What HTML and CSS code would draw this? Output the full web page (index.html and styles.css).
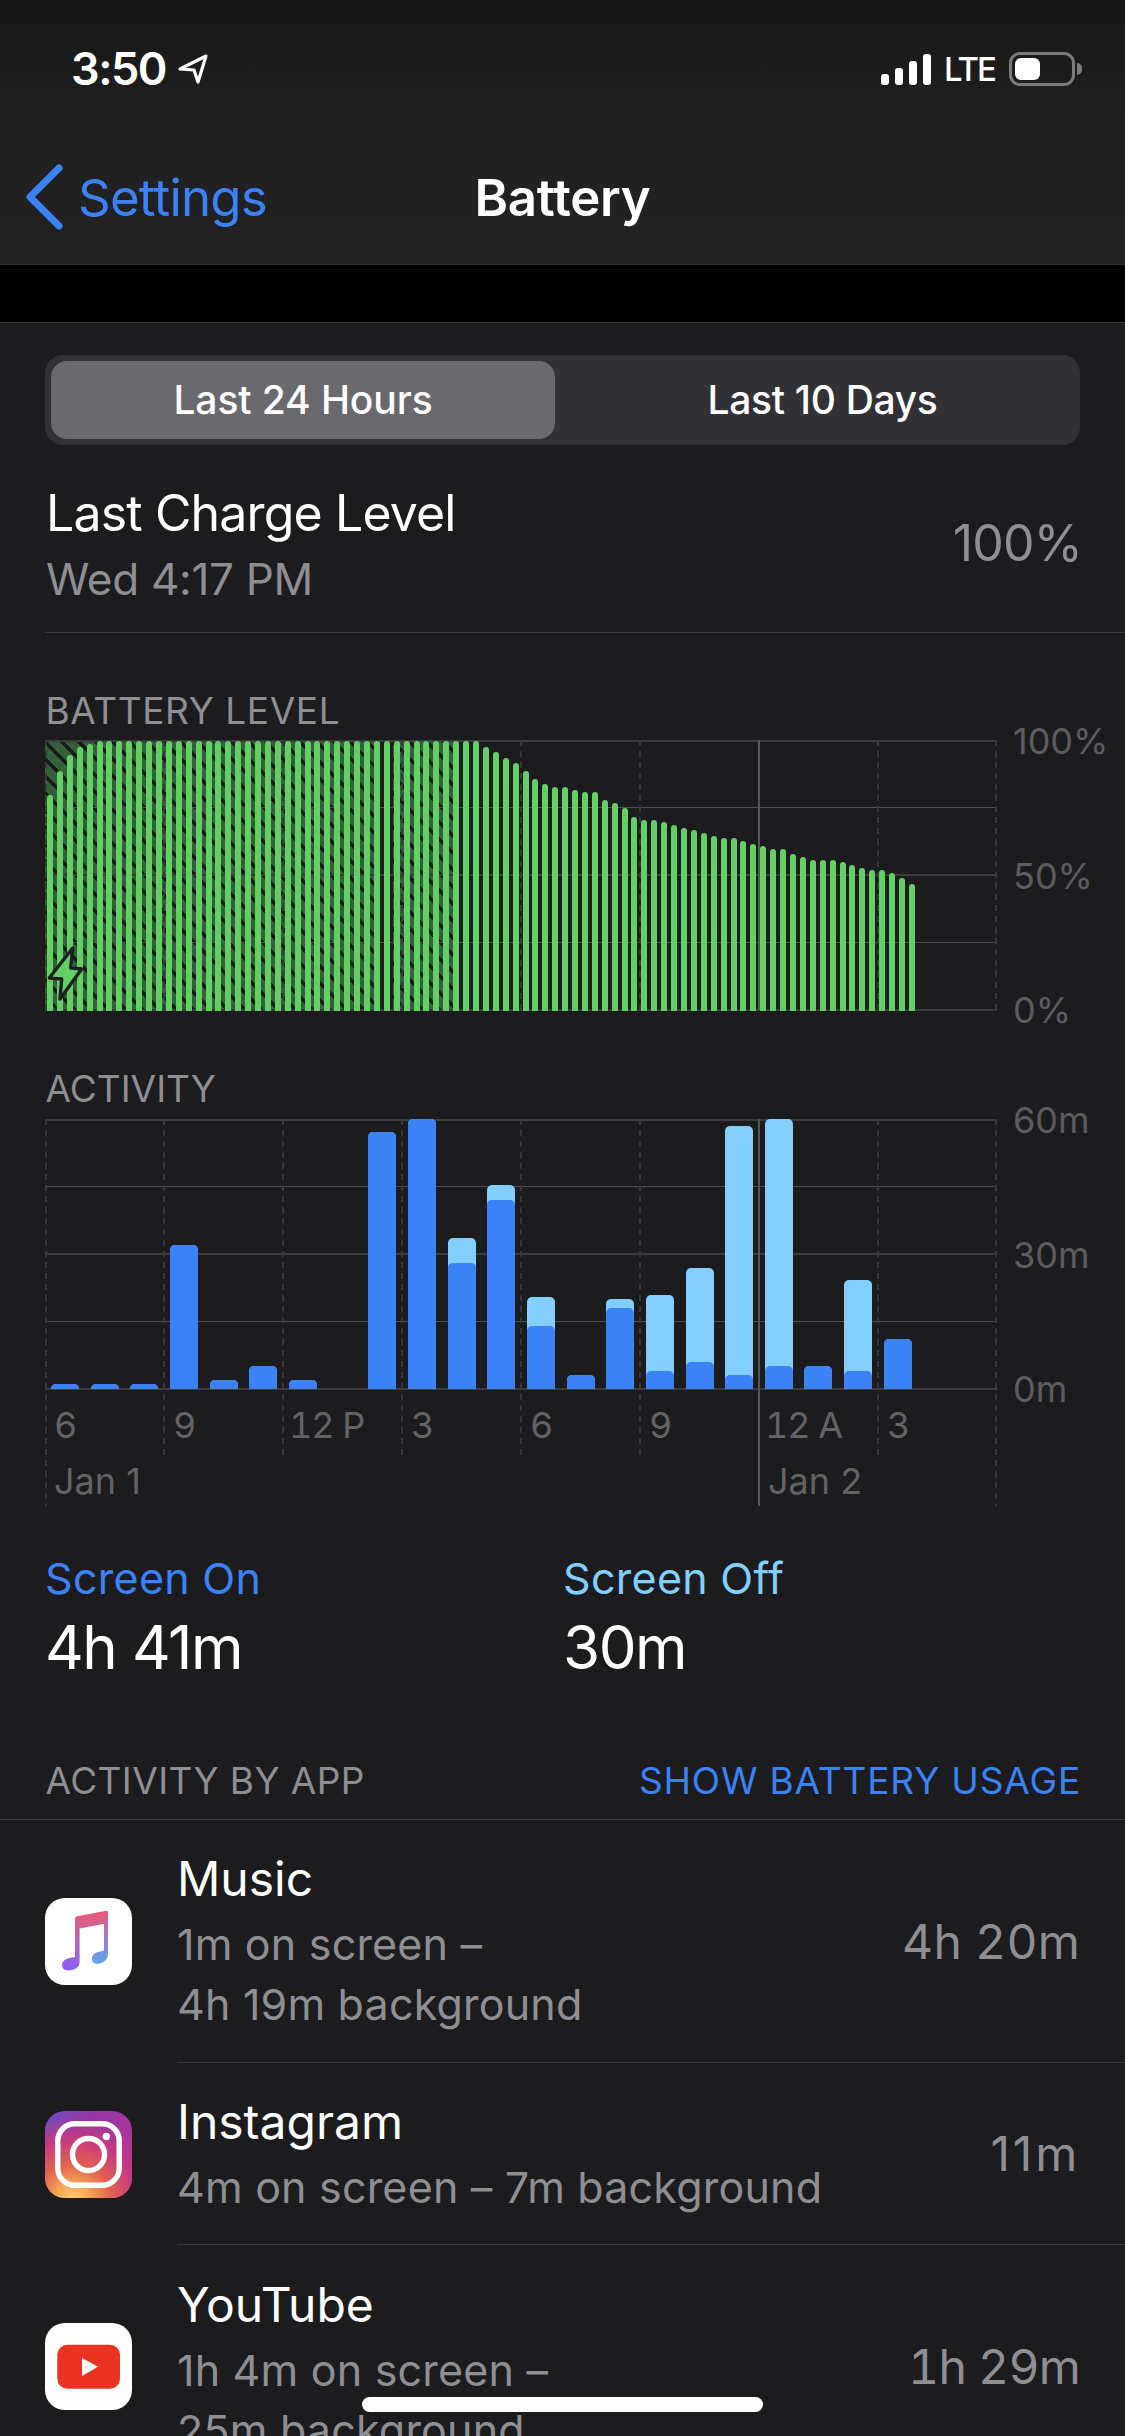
FILE: index.html
```html
<!DOCTYPE html>
<html lang="en">
<head>
<meta charset="utf-8">
<title>Battery</title>
<link rel="stylesheet" href="styles.css">
</head>
<body>
<div class="screen">
  <header class="header">
    <div class="status">
      <div class="status-left">
        <span class="time">3:50</span>
        <svg class="loc" width="32" height="32" viewBox="0 0 32 32"><path d="M29 3 L3 16 L17 17 L21 29 Z"/></svg>
      </div>
      <div class="status-right">
        <div class="signal"><i class="s1"></i><i class="s2"></i><i class="s3"></i><i class="s4"></i></div>
        <span class="lte">LTE</span>
        <div class="batt"><div class="batt-body"><div class="batt-fill"></div></div><div class="batt-nub"></div></div>
      </div>
    </div>
    <nav class="nav">
      <div class="back">
        <svg class="chev" width="38" height="66" viewBox="0 0 38 66"><path d="M34 4 L5 33 L34 62"/></svg>
        <span>Settings</span>
      </div>
      <div class="nav-title">Battery</div>
      <div></div>
    </nav>
  </header>
  <div class="gap"></div>
  <main class="content">
    <div class="seg">
      <div class="seg-item seg-on">Last 24 Hours</div>
      <div class="seg-item seg-off">Last 10 Days</div>
    </div>
    <div class="charge">
      <div>
        <div class="charge-title">Last Charge Level</div>
        <div class="charge-sub">Wed 4:17 PM</div>
      </div>
      <div class="charge-val">100%</div>
    </div>

    <div class="sec-title sec-battery">BATTERY LEVEL</div>
    <div class="chart">
      <div class="plot plot-battery">
        <div class="hatch hatch-a"></div>
        <div class="hatch hatch-b"></div>
        <svg class="grid" width="952" height="270" viewBox="0 0 952 270">
          <line class="hm" x1="0" y1="1" x2="952" y2="1"/>
          <line class="hl" x1="0" y1="67.5" x2="952" y2="67.5"/>
          <line class="hm" x1="0" y1="135" x2="952" y2="135"/>
          <line class="hl" x1="0" y1="202.5" x2="952" y2="202.5"/>
          <line class="hm" x1="0" y1="270" x2="952" y2="270"/>
          <line class="vd" x1="1" y1="0" x2="1" y2="270"/>
          <line class="vd" x1="119" y1="0" x2="119" y2="270"/>
          <line class="vd" x1="238" y1="0" x2="238" y2="270"/>
          <line class="vd" x1="357" y1="0" x2="357" y2="270"/>
          <line class="vd" x1="476" y1="0" x2="476" y2="270"/>
          <line class="vd" x1="595" y1="0" x2="595" y2="270"/>
          <line class="vs" x1="714" y1="0" x2="714" y2="270"/>
          <line class="vd" x1="833" y1="0" x2="833" y2="270"/>
          <line class="vd" x1="951" y1="0" x2="951" y2="270"/>
        </svg>
        <div class="bbars">
          <i style="height:216px"></i><i style="height:240px"></i><i style="height:256px"></i><i style="height:264px"></i><i style="height:267px"></i>
          <i style="height:270px"></i><i style="height:270px"></i><i style="height:270px"></i><i style="height:270px"></i><i style="height:270px"></i>
          <i style="height:270px"></i><i style="height:270px"></i><i style="height:270px"></i><i style="height:270px"></i><i style="height:270px"></i>
          <i style="height:270px"></i><i style="height:270px"></i><i style="height:270px"></i><i style="height:270px"></i><i style="height:270px"></i>
          <i style="height:270px"></i><i style="height:270px"></i><i style="height:270px"></i><i style="height:270px"></i><i style="height:270px"></i>
          <i style="height:270px"></i><i style="height:270px"></i><i style="height:270px"></i><i style="height:270px"></i><i style="height:270px"></i>
          <i style="height:270px"></i><i style="height:270px"></i><i style="height:270px"></i><i style="height:270px"></i><i style="height:270px"></i>
          <i style="height:270px"></i><i style="height:270px"></i><i style="height:270px"></i><i style="height:270px"></i><i style="height:270px"></i>
          <i style="height:270px"></i><i style="height:270px"></i><i style="height:270px"></i><i style="height:270px"></i>
          <i style="height:264px"></i><i style="height:259px"></i><i style="height:253px"></i><i style="height:248px"></i><i style="height:240px"></i>
          <i style="height:232px"></i><i style="height:227px"></i><i style="height:224px"></i><i style="height:224px"></i><i style="height:221px"></i>
          <i style="height:219px"></i><i style="height:219px"></i><i style="height:211px"></i><i style="height:208px"></i><i style="height:203px"></i>
          <i style="height:194px"></i><i style="height:191px"></i><i style="height:191px"></i><i style="height:189px"></i><i style="height:186px"></i>
          <i style="height:183px"></i><i style="height:181px"></i><i style="height:178px"></i><i style="height:175px"></i><i style="height:173px"></i>
          <i style="height:173px"></i><i style="height:170px"></i><i style="height:167px"></i><i style="height:165px"></i><i style="height:162px"></i>
          <i style="height:162px"></i><i style="height:157px"></i><i style="height:154px"></i><i style="height:151px"></i><i style="height:151px"></i>
          <i style="height:151px"></i><i style="height:149px"></i><i style="height:146px"></i><i style="height:143px"></i><i style="height:141px"></i>
          <i style="height:141px"></i><i style="height:138px"></i><i style="height:133px"></i><i style="height:127px"></i>
        </div>
        <svg class="bolt" width="42" height="60" viewBox="0 0 42 60"><path d="M26.7 3 L24.7 23 L35.7 24 L14 54 L15.7 34 L3.3 33 Z"/></svg>
      </div>
      <div class="axis"><span>100%</span><span>50%</span><span>0%</span></div>
    </div>

    <div class="sec-title sec-activity">ACTIVITY</div>
    <div class="chart">
      <div class="plot plot-activity">
        <svg class="grid" width="952" height="387" viewBox="0 0 952 387">
          <line class="hm" x1="0" y1="1" x2="952" y2="1"/>
          <line class="hl" x1="0" y1="67.5" x2="952" y2="67.5"/>
          <line class="hm" x1="0" y1="135" x2="952" y2="135"/>
          <line class="hl" x1="0" y1="202.5" x2="952" y2="202.5"/>
          <line class="hm" x1="0" y1="270" x2="952" y2="270"/>
          <line class="vd" x1="1" y1="0" x2="1" y2="387"/>
          <line class="vd" x1="119" y1="0" x2="119" y2="338"/>
          <line class="vd" x1="238" y1="0" x2="238" y2="338"/>
          <line class="vd" x1="357" y1="0" x2="357" y2="338"/>
          <line class="vd" x1="476" y1="0" x2="476" y2="338"/>
          <line class="vd" x1="595" y1="0" x2="595" y2="338"/>
          <line class="vs" x1="714" y1="0" x2="714" y2="387"/>
          <line class="vd" x1="833" y1="0" x2="833" y2="338"/>
          <line class="vd" x1="951" y1="0" x2="951" y2="387"/>
        </svg>
        <div class="abars">
          <div class="ab" style="height:5px"><div class="ab-on" style="height:5px"></div></div>
          <div class="ab" style="height:5px"><div class="ab-on" style="height:5px"></div></div>
          <div class="ab" style="height:5px"><div class="ab-on" style="height:5px"></div></div>
          <div class="ab" style="height:144px"><div class="ab-on" style="height:144px"></div></div>
          <div class="ab" style="height:9px"><div class="ab-on" style="height:9px"></div></div>
          <div class="ab" style="height:23px"><div class="ab-on" style="height:23px"></div></div>
          <div class="ab" style="height:9px"><div class="ab-on" style="height:9px"></div></div>
          <div class="ab" style="height:0"></div>
          <div class="ab" style="height:257px"><div class="ab-on" style="height:257px"></div></div>
          <div class="ab" style="height:270px"><div class="ab-on" style="height:270px"></div></div>
          <div class="ab" style="height:151px"><div class="ab-on" style="height:126px"></div></div>
          <div class="ab" style="height:204px"><div class="ab-on" style="height:189px"></div></div>
          <div class="ab" style="height:92px"><div class="ab-on" style="height:63px"></div></div>
          <div class="ab" style="height:14px"><div class="ab-on" style="height:14px"></div></div>
          <div class="ab" style="height:90px"><div class="ab-on" style="height:81px"></div></div>
          <div class="ab" style="height:94px"><div class="ab-on" style="height:18px"></div></div>
          <div class="ab" style="height:121px"><div class="ab-on" style="height:27px"></div></div>
          <div class="ab" style="height:263px"><div class="ab-on" style="height:14px"></div></div>
          <div class="ab" style="height:270px"><div class="ab-on" style="height:23px"></div></div>
          <div class="ab" style="height:23px"><div class="ab-on" style="height:23px"></div></div>
          <div class="ab" style="height:109px"><div class="ab-on" style="height:18px"></div></div>
          <div class="ab" style="height:50px"><div class="ab-on" style="height:50px"></div></div>
        </div>
        <div class="ticks">
          <span>6</span><span>9</span><span class="t12">12 P</span><span>3</span><span>6</span><span>9</span><span class="t12">12 A</span><span>3</span>
        </div>
        <div class="days">
          <span class="day1">Jan 1</span><span class="day2">Jan 2</span>
        </div>
      </div>
      <div class="axis"><span>60m</span><span>30m</span><span>0m</span></div>
    </div>

    <div class="stats">
      <div>
        <div class="stat-label stat-on">Screen On</div>
        <div class="stat-val">4h 41m</div>
      </div>
      <div>
        <div class="stat-label stat-off">Screen Off</div>
        <div class="stat-val">30m</div>
      </div>
    </div>

    <div class="apps-head">
      <span>ACTIVITY BY APP</span>
      <span class="apps-link">SHOW BATTERY USAGE</span>
    </div>

    <div class="row">
      <svg class="icon" width="87" height="87" viewBox="0 0 87 87">
        <defs>
          <linearGradient id="noteA" x1="0" y1="12" x2="0" y2="72" gradientUnits="userSpaceOnUse"><stop offset="0" stop-color="#ee5a6f"/><stop offset="0.55" stop-color="#b566c0"/><stop offset="1" stop-color="#8a5cf8"/></linearGradient>
          <linearGradient id="noteB" x1="0" y1="12" x2="0" y2="68" gradientUnits="userSpaceOnUse"><stop offset="0" stop-color="#e45a78"/><stop offset="0.45" stop-color="#a878cc"/><stop offset="1" stop-color="#55a8f2"/></linearGradient>
        </defs>
        <rect width="87" height="87" rx="20" fill="#fff"/>
        <path fill="url(#noteA)" d="M30 21 Q30 18.6 32 18.2 L60 13 L60 25.8 L34.6 30.6 L34.6 64 Q34.6 70 27 72 Q17 74 17 67 Q17 62 24 60 L30 59 Z"/>
        <path fill="url(#noteB)" d="M59 13.3 L61 12.7 Q63 12.4 63 14.5 L63 56 Q63 63 55 65.5 Q47 67 47 60.5 Q47 55.5 53 54 L59 52.6 Z"/>
      </svg>
      <div class="row-body">
        <div class="row-text">
          <div class="row-title">Music</div>
          <div class="row-sub">1m on screen –<br>4h 19m background</div>
        </div>
        <div class="row-val">4h 20m</div>
      </div>
    </div>

    <div class="row">
      <svg class="icon" width="87" height="87" viewBox="0 0 87 87">
        <defs>
          <clipPath id="igClip"><rect width="87" height="87" rx="20"/></clipPath>
          <linearGradient id="igBase" x1="0" y1="0" x2="1" y2="0.35"><stop offset="0" stop-color="#6a4fc4"/><stop offset="0.45" stop-color="#8f38a6"/><stop offset="1" stop-color="#a9359a"/></linearGradient>
          <radialGradient id="igGlow" cx="0.32" cy="1.05" r="1"><stop offset="0" stop-color="#fcd67c"/><stop offset="0.2" stop-color="#f5a955"/><stop offset="0.45" stop-color="#e0614f"/><stop offset="0.72" stop-color="#c83a80"/><stop offset="1" stop-color="#c83a80" stop-opacity="0"/></radialGradient>
        </defs>
        <g clip-path="url(#igClip)">
          <rect width="87" height="87" fill="url(#igBase)"/>
          <rect width="87" height="87" fill="url(#igGlow)"/>
        </g>
        <rect class="ig-line" x="12.8" y="12.8" width="61.4" height="61.4" rx="17"/>
        <circle class="ig-line" cx="43.5" cy="43.5" r="16"/>
        <circle cx="61.3" cy="25.5" r="3.7" fill="#fff"/>
      </svg>
      <div class="row-body row-short">
        <div class="row-text">
          <div class="row-title">Instagram</div>
          <div class="row-sub">4m on screen – 7m background</div>
        </div>
        <div class="row-val val-11">11m</div>
      </div>
    </div>

    <div class="row">
      <svg class="icon" width="87" height="87" viewBox="0 0 87 87">
        <rect width="87" height="87" rx="20" fill="#fff"/>
        <rect x="12.3" y="21.7" width="62.7" height="44" rx="10" fill="#ea3323"/>
        <path d="M37 35 L53 43.7 L37 53 Z" fill="#fff"/>
      </svg>
      <div class="row-body row-last">
        <div class="row-text">
          <div class="row-title">YouTube</div>
          <div class="row-sub">1h 4m on screen –<br>25m background</div>
        </div>
        <div class="row-val val-1h">1h 29m</div>
      </div>
    </div>
  </main>
  <div class="home"></div>
</div>
</body>
</html>
```

FILE: styles.css
```css
* { box-sizing: border-box; }
html, body { margin: 0; padding: 0; background: #000; }
body { font-family: Inter, "Liberation Sans", sans-serif; color: #fff; }
.screen { position: relative; width: 1125px; height: 2436px; overflow: hidden; background: #1c1c1e; display: flex; flex-direction: column; }

.header { flex: none; height: 265px; background: linear-gradient(180deg, #161616 0, #202021 120px, #222224 265px); border-bottom: 1px solid #2e2e30; }
.status { display: flex; justify-content: space-between; align-items: center; height: 50px; margin-top: 44px; padding: 0 43px 0 71px; }
.status-left { display: flex; align-items: center; gap: 11px; }
.time { font-size: 45px; font-weight: 600; letter-spacing: -1.5px; line-height: 50px; }
.loc { fill: none; stroke: #fff; stroke-width: 3.2; stroke-linejoin: round; }
.status-right { display: flex; align-items: center; }
.signal { display: flex; align-items: flex-end; gap: 5.5px; height: 32px; }
.signal i { display: block; width: 8.5px; background: #fff; border-radius: 3px; }
.s1 { height: 11px; } .s2 { height: 17px; } .s3 { height: 24px; } .s4 { height: 31px; }
.lte { font-size: 33px; font-weight: 500; line-height: 50px; margin-left: 13px; letter-spacing: -2px; }
.batt { display: flex; align-items: center; margin-left: 14px; }
.batt-body { width: 66px; height: 34px; border: 3px solid #7b7b7b; border-radius: 11px; padding: 3px; }
.batt-fill { width: 25px; height: 22px; background: #fff; border-radius: 6px; }
.batt-nub { width: 5px; height: 12px; margin-left: 2px; background: #7b7b7b; border-radius: 0 6px 6px 0; }

.nav { display: grid; grid-template-columns: 1fr auto 1fr; align-items: center; height: 66px; margin-top: 70px; padding-left: 25px; }
.back { display: flex; align-items: center; color: #3b82f6; font-size: 51px; letter-spacing: -0.8px; gap: 15px; }
.chev { fill: none; stroke: #3b82f6; stroke-width: 7; stroke-linecap: round; stroke-linejoin: round; }
.nav-title { font-size: 51px; font-weight: 600; letter-spacing: -0.3px; margin-right: 25px; }

.gap { flex: none; height: 57px; background: #000; }
.content { flex: 1; min-height: 0; border-top: 1px solid #38383a; background: #1c1c1e; }

.seg { display: flex; margin: 32px 45px 0; height: 90px; padding: 6px; background: #323236; border-radius: 18px; }
.seg-item { display: flex; align-items: center; justify-content: center; flex: 1; padding-bottom: 2px; font-size: 39px; font-weight: 500; letter-spacing: -0.1px; border-radius: 16px; }
.seg-on { flex: none; width: 504px; background: #6a6a6e; }
.seg-off { padding-left: 16px; letter-spacing: -0.3px; }

.charge { display: flex; justify-content: space-between; align-items: center; margin-left: 45px; padding: 35px 43px 20px 1px; border-bottom: 1px solid #38383a; }
.charge-title { font-size: 50px; line-height: 66px; letter-spacing: -0.85px; }
.charge-sub { font-size: 44px; line-height: 66px; color: #8e8e93; letter-spacing: -0.3px; }
.charge-val { margin-bottom: 6px; font-size: 50px; color: #8e8e93; letter-spacing: -0.8px; }

.sec-title { margin-left: 45.5px; font-size: 37px; line-height: 44px; color: #8e8e93; letter-spacing: 0.6px; }
.sec-battery { margin-top: 56px; margin-bottom: -1px; }
.sec-activity { margin-top: 56px; letter-spacing: 0; }

.chart { display: grid; grid-template-columns: 952px auto; column-gap: 16px; margin: 8px 0 0 45px; }
.plot { position: relative; width: 952px; }
.plot-battery { height: 271px; }
.grid { position: absolute; left: 0; top: 0; overflow: visible; }
.hm { stroke: #3c3c3e; stroke-width: 2; }
.hl { stroke: #505052; stroke-width: 1; }
.vd { stroke: #38383a; stroke-width: 2; stroke-dasharray: 6 5; }
.vs { stroke: #55555a; stroke-width: 2; }
.hatch { position: absolute; top: 1px; height: 270px; background: repeating-linear-gradient(45deg, #31603a 0, #31603a 8.5px, #191b1b 8.5px, #191b1b 12px); }
.hatch-a { left: 0; width: 335px; }
.hatch-b { left: 348px; width: 60px; }
.bbars { position: relative; display: flex; align-items: flex-end; gap: 3.92px; height: 271px; padding-left: 2px; }
.bbars i { display: block; width: 6px; flex: none; background: #63cf65; border-radius: 3px 3px 0 0; }
.bolt { position: absolute; left: 1px; top: 205px; fill: #63cf65; stroke: #1c221d; stroke-width: 3.4; stroke-linejoin: round; }

.abars { position: relative; display: flex; align-items: flex-end; gap: 11.67px; height: 270px; padding-left: 6px; }
.ab { position: relative; display: flex; flex-direction: column; justify-content: flex-end; width: 28px; flex: none; background: #82cffe; border-radius: 5px 5px 0 0; }
.ab-on { background: #3b82f6; border-radius: 5px 5px 0 0; }
.ticks { position: relative; display: grid; grid-template-columns: repeat(8, 119px); margin-top: 14px; font-size: 36px; line-height: 44px; color: #636366; font-variant-numeric: tabular-nums; letter-spacing: -1px; }
.ticks span { padding-left: 9px; }
.ticks .t12 { padding-left: 6px; }
.days { position: relative; display: grid; grid-template-columns: repeat(8, 119px); margin-top: 12px; height: 44px; font-size: 36px; line-height: 44px; color: #636366; }
.day1 { grid-column: 1 / span 2; padding-left: 9px; }
.day2 { grid-column: 7 / span 2; padding-left: 9px; }

.axis { display: flex; flex-direction: column; justify-content: space-between; height: 270px; font-size: 36px; color: #5c5c60; }
.axis span { height: 0; line-height: 0; margin-top: 1px; }

.stats { display: grid; grid-template-columns: 518px 1fr; margin: 50px 0 0 45px; }
.stat-label { font-size: 43px; line-height: 50px; letter-spacing: 0.3px; }
.stat-on { color: #3b82f6; }
.stat-off { color: #82cffe; }
.stat-val { font-size: 60px; line-height: 70px; margin-top: 9px; letter-spacing: -1.4px; }

.apps-head { display: flex; justify-content: space-between; margin-top: 77px; padding: 0 44px 16px 45.5px; border-bottom: 1px solid #38383a; font-size: 37px; line-height: 44px; color: #8e8e93; letter-spacing: 0.4px; }
.apps-link { color: #3b82f6; letter-spacing: 0.85px; }

.row { display: flex; align-items: center; padding-left: 45px; }
.icon { flex: none; }
.ig-line { fill: none; stroke: #fff; stroke-width: 5.4; }
.row-body { flex: 1; display: flex; justify-content: space-between; align-items: center; height: 243px; margin-left: 45px; padding-right: 45px; border-bottom: 1px solid #38383a; }
.row-short { height: 182px; }
.row-last { border-bottom: 0; }
.row-title { font-size: 48px; line-height: 62px; letter-spacing: 0; }
.row-sub { margin-top: 4px; font-size: 43px; line-height: 60px; color: #8e8e93; letter-spacing: 0.2px; }
.row-val { font-size: 48px; color: #8e8e93; letter-spacing: 0.2px; font-variant-numeric: tabular-nums; }
.val-11 { font-variant-numeric: normal; letter-spacing: 2.8px; }
.val-1h { letter-spacing: -0.8px; }

.home { position: absolute; left: 362px; top: 2397px; width: 401px; height: 15px; background: #fff; border-radius: 8px; }
```
